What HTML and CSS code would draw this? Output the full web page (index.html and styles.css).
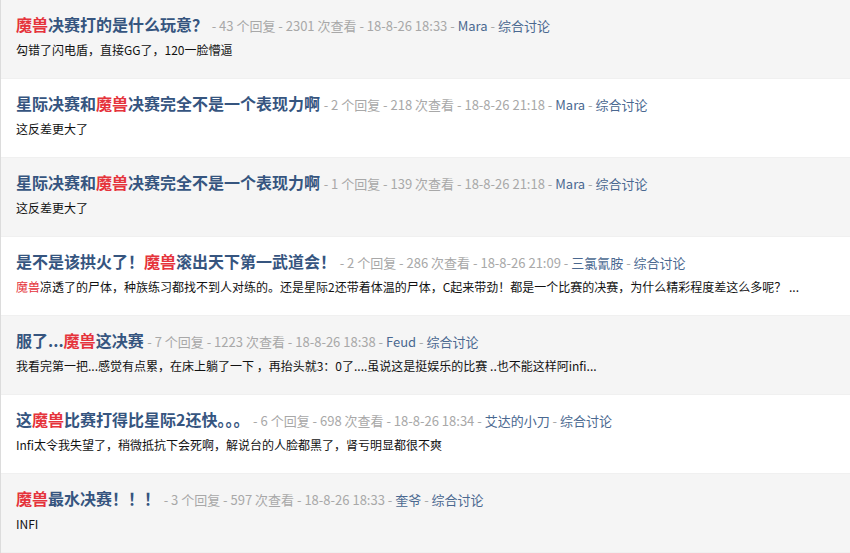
FILE: index.html
```html
<!DOCTYPE html>
<html>
  <head>
    <meta charset="utf-8">
    <title>综合讨论</title>
    <link rel="stylesheet" href="styles.css">
  </head>
  <body>
  <div class="topic-list">

    <div class="topic">
      <div class="topic-head">
        <a class="topic-title" href="#"><em>魔兽</em>决赛打的是什么玩意？</a>
        <span class="topic-meta">- 43 个回复 - 2301 次查看 - 18-8-26 18:33 - <a href="#">Mara</a> - <a href="#">综合讨论</a></span>
      </div>
      <p class="topic-desc">勾错了闪电盾，直接GG了，120一脸懵逼</p>
    </div>

    <div class="topic">
      <div class="topic-head">
        <a class="topic-title" href="#">星际决赛和<em>魔兽</em>决赛完全不是一个表现力啊</a>
        <span class="topic-meta">- 2 个回复 - 218 次查看 - 18-8-26 21:18 - <a href="#">Mara</a> - <a href="#">综合讨论</a></span>
      </div>
      <p class="topic-desc">这反差更大了</p>
    </div>

    <div class="topic">
      <div class="topic-head">
        <a class="topic-title" href="#">星际决赛和<em>魔兽</em>决赛完全不是一个表现力啊</a>
        <span class="topic-meta">- 1 个回复 - 139 次查看 - 18-8-26 21:18 - <a href="#">Mara</a> - <a href="#">综合讨论</a></span>
      </div>
      <p class="topic-desc">这反差更大了</p>
    </div>

    <div class="topic">
      <div class="topic-head">
        <a class="topic-title" href="#">是不是该拱火了！<em>魔兽</em>滚出天下第一武道会！</a>
        <span class="topic-meta">- 2 个回复 - 286 次查看 - 18-8-26 21:09 - <a href="#">三氯氰胺</a> - <a href="#">综合讨论</a></span>
      </div>
      <p class="topic-desc"><em>魔兽</em>凉透了的尸体，种族练习都找不到人对练的。还是星际2还带着体温的尸体，C起来带劲！都是一个比赛的决赛，为什么精彩程度差这么多呢？ ...</p>
    </div>

    <div class="topic">
      <div class="topic-head">
        <a class="topic-title" href="#">服了...<em>魔兽</em>这决赛</a>
        <span class="topic-meta">- 7 个回复 - 1223 次查看 - 18-8-26 18:38 - <a href="#">Feud</a> - <a href="#">综合讨论</a></span>
      </div>
      <p class="topic-desc">我看完第一把...感觉有点累，在床上躺了一下 ，再抬头就3：0了....虽说这是挺娱乐的比赛 ..也不能这样阿infi...</p>
    </div>

    <div class="topic">
      <div class="topic-head">
        <a class="topic-title" href="#">这<em>魔兽</em>比赛打得比星际2还快。。。</a>
        <span class="topic-meta">- 6 个回复 - 698 次查看 - 18-8-26 18:34 - <a href="#">艾达的小刀</a> - <a href="#">综合讨论</a></span>
      </div>
      <p class="topic-desc">Infi太令我失望了，稍微抵抗下会死啊，解说台的人脸都黑了，肾亏明显都很不爽</p>
    </div>

    <div class="topic">
      <div class="topic-head">
        <a class="topic-title" href="#"><em>魔兽</em>最水决赛！！！</a>
        <span class="topic-meta">- 3 个回复 - 597 次查看 - 18-8-26 18:33 - <a href="#">奎爷</a> - <a href="#">综合讨论</a></span>
      </div>
      <p class="topic-desc">INFI</p>
    </div>

  </div>
  </body>
</html>
```

FILE: styles.css
```css
body {
  margin: 0;
  background: #fff;
  font-family: "Microsoft YaHei", "Noto Sans CJK SC", "Noto Sans", sans-serif;
}
.topic-list {
  border-left: 1px solid #dcdcdc;
}
.topic {
  box-sizing: border-box;
  height: 79px;
  padding: 14px 15px 0;
  border-bottom: 1px solid #f0f0f0;
}
.topic:nth-child(odd) {
  background: #f5f5f5;
}
.topic-head {
  line-height: 20px;
  white-space: nowrap;
}
.topic-title {
  font-size: 16px;
  font-weight: bold;
  color: #36557f;
  text-decoration: none;
}
.topic-title em,
.topic-desc em {
  font-style: normal;
  color: #e5333b;
}
.topic-meta {
  font-size: 13px;
  color: #a8a8a8;
}
.topic-meta a {
  color: #4a6890;
  text-decoration: none;
}
.topic-desc {
  margin: 4px 0 0;
  font-size: 12px;
  line-height: 20px;
  color: #111;
  white-space: nowrap;
}
```
